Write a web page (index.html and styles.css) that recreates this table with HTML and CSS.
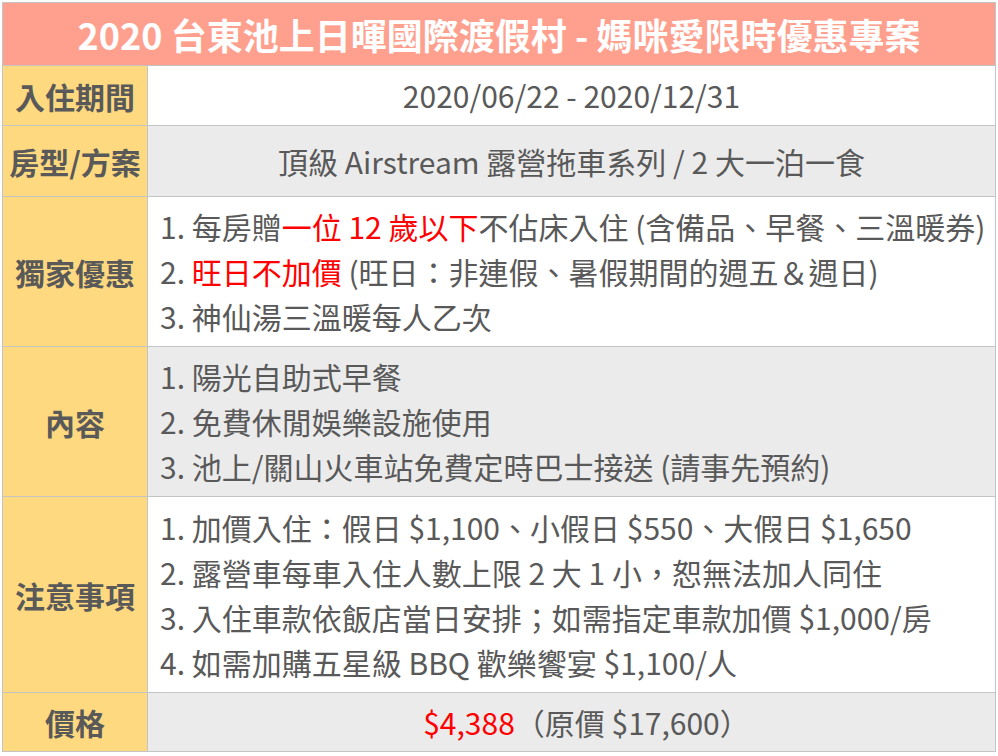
FILE: index.html
```html
<!DOCTYPE html>
<html lang="zh-Hant">
<head>
<meta charset="utf-8">
<link rel="stylesheet" href="styles.css">
</head>
<body>
<div class="wrap">
<table class="plan">
  <colgroup>
    <col class="c-label">
    <col class="c-val">
  </colgroup>
  <tr class="r-head">
    <th colspan="2" class="title">2020 台東池上日暉國際渡假村 - 媽咪愛限時優惠專案</th>
  </tr>
  <tr class="r1">
    <th class="label">入住期間</th>
    <td class="val center">2020/06/22 - 2020/12/31</td>
  </tr>
  <tr class="r2 alt">
    <th class="label">房型/方案</th>
    <td class="val center">頂級 Airstream 露營拖車系列 / 2 大一泊一食</td>
  </tr>
  <tr class="r3">
    <th class="label">獨家優惠</th>
    <td class="val">
      <div>1. 每房贈<span class="red">一位 12 歲以下</span>不佔床入住 (含備品、早餐、三溫暖券)</div>
      <div>2. <span class="red">旺日不加價</span> (旺日：非連假、暑假期間的週五＆週日)</div>
      <div>3. 神仙湯三溫暖每人乙次</div>
    </td>
  </tr>
  <tr class="r4 alt">
    <th class="label">內容</th>
    <td class="val">
      <div>1. 陽光自助式早餐</div>
      <div>2. 免費休閒娛樂設施使用</div>
      <div>3. 池上/關山火車站免費定時巴士接送 (請事先預約)</div>
    </td>
  </tr>
  <tr class="r5">
    <th class="label">注意事項</th>
    <td class="val">
      <div>1. 加價入住：假日 $1,100、小假日 $550、大假日 $1,650</div>
      <div>2. 露營車每車入住人數上限 2 大 1 小，恕無法加人同住</div>
      <div>3. 入住車款依飯店當日安排；如需指定車款加價 $1,000/房</div>
      <div>4. 如需加購五星級 BBQ 歡樂饗宴 $1,100/人</div>
    </td>
  </tr>
  <tr class="r6 alt">
    <th class="label">價格</th>
    <td class="val center price"><span class="red">$4,388</span>（原價 $17,600）</td>
  </tr>
</table>
</div>
</body>
</html>
```

FILE: styles.css
```css
html, body {
  margin: 0;
  padding: 0;
  background: #ffffff;
}
.wrap {
  padding: 2px 0 0 2px;
}
.plan {
  border-collapse: collapse;
  width: 993px;
  table-layout: fixed;
  font-family: "Noto Sans CJK TC", "Noto Sans", sans-serif;
  color: #595959;
}
.c-label { width: 145px; }
.c-val { width: 848px; }
.plan th, .plan td {
  border: 1px solid #c4c4c4;
  padding: 0;
  vertical-align: middle;
}
.title {
  background: #ffa08f;
  color: #ffffff;
  font-size: 36px;
  font-weight: 700;
  text-align: center;
  line-height: 44px;
}
.label {
  background: #ffd980;
  font-size: 30px;
  font-weight: 700;
  text-align: center;
  line-height: 40px;
}
.val {
  font-size: 30px;
  font-weight: 400;
  line-height: 45px;
  padding: 0 0 0 12px !important;
  background: #ffffff;
  text-align: left;
  white-space: nowrap;
  overflow: hidden;
}
.alt .val {
  background: #ebebeb;
}
.val.center {
  text-align: center;
  padding: 0 !important;
}
.val.price {
  padding: 0 0 0 30px !important;
}
.red {
  color: #ff0000;
}
.r-head { height: 63px; }
.r1 { height: 60px; }
.r2 { height: 71px; }
.r3 { height: 150px; }
.r4 { height: 150px; }
.r5 { height: 196px; }
.r6 { height: 59px; }
```
